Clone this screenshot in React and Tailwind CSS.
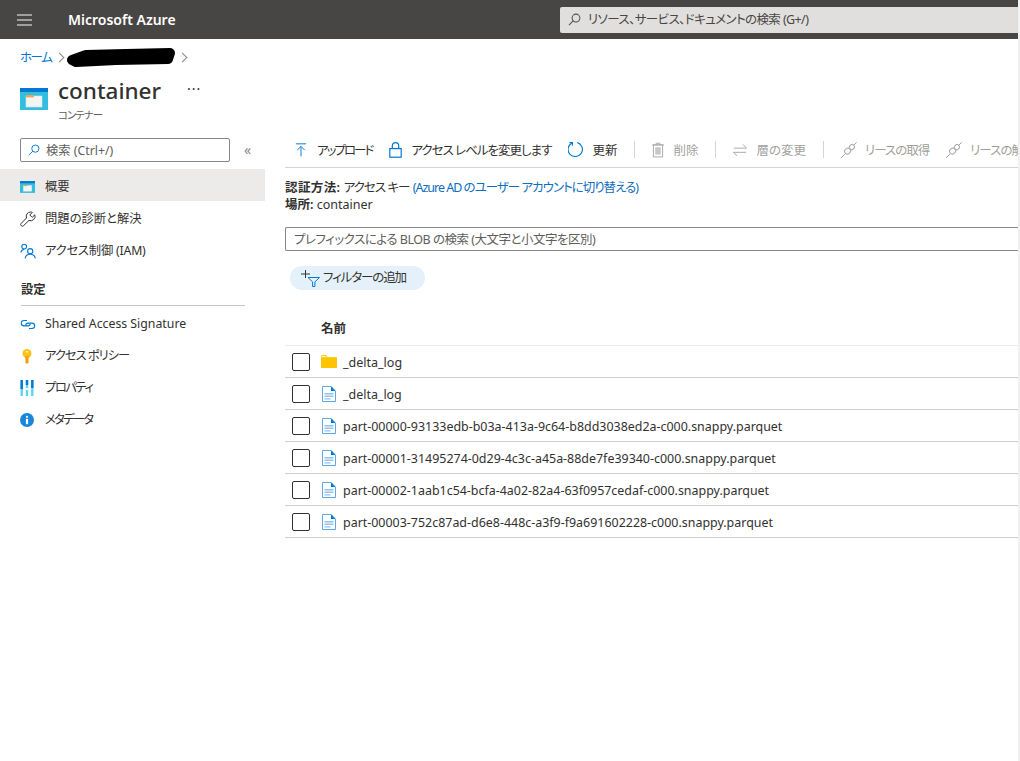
import React from "react";

const font = "font-['Noto_Sans','Noto_Sans_CJK_JP',sans-serif] [font-feature-settings:'palt']";

const files = [
  "_delta_log",
  "part-00000-93133edb-b03a-413a-9c64-b8dd3038ed2a-c000.snappy.parquet",
  "part-00001-31495274-0d29-4c3c-a45a-88de7fe39340-c000.snappy.parquet",
  "part-00002-1aab1c54-bcfa-4a02-82a4-63f0957cedaf-c000.snappy.parquet",
  "part-00003-752c87ad-d6e8-448c-a3f9-f9a691602228-c000.snappy.parquet",
];

const SearchIcon = ({ color = "#505050", size = 14 }) => (
  <svg width={size} height={size} viewBox="0 0 14 14" fill="none" stroke={color} strokeWidth="1.1">
    <circle cx="8.6" cy="5.4" r="4.2" />
    <path d="M5.6 8.4 1 13" />
  </svg>
);

const ContainerIcon = ({ w = 28, h = 22 }) => (
  <svg width={w} height={h} viewBox="0 0 28 22">
    <rect width="28" height="22" fill="#32bedd" />
    <rect width="28" height="4" fill="#0078d4" />
    <rect x="6" y="8" width="16" height="11" fill="#f4f4f4" stroke="#c9e6ee" strokeWidth="0.6" />
    <rect x="6" y="7" width="8" height="2.4" fill="#e8a94f" />
  </svg>
);

const WrenchIcon = () => (
  <svg width="16" height="16" viewBox="0 0 16 16" fill="none" stroke="#333" strokeWidth="1">
    <path d="M10.5 1a4.4 4.4 0 0 0-4 6L1.2 12.4a1.6 1.6 0 0 0 2.3 2.3L9 9.4a4.4 4.4 0 0 0 5.8-5.6L12.2 6.4 9.8 4 12.3 1.4A4.4 4.4 0 0 0 10.5 1Z" />
  </svg>
);

const UsersIcon = () => (
  <svg width="16" height="16" viewBox="0 0 16 16" fill="none" stroke="#0078d4" strokeWidth="1.1">
    <circle cx="4.2" cy="3.6" r="2.4" />
    <path d="M.8 9.5c.4-2 1.7-3 3.4-3" />
    <circle cx="10.2" cy="8.2" r="2.6" />
    <path d="M5.2 15.5c.3-2.7 2.3-4.2 5-4.2s4.7 1.5 5 4.2" />
  </svg>
);

const LinkIcon = () => (
  <svg width="16" height="11" viewBox="0 0 16 11" fill="none" stroke="#0078d4" strokeWidth="1.1">
    <path d="M7 1.5H4a2.7 2.7 0 0 0 0 5.4h4a2.5 2.5 0 0 0 2.3-2.4" />
    <path d="M9 9.5h3a2.7 2.7 0 0 0 0-5.4H8a2.5 2.5 0 0 0-2.3 2.4" />
  </svg>
);

const KeyIcon = () => (
  <svg width="10" height="15" viewBox="0 0 10 15" className="ml-[2px]">
    <circle cx="5" cy="4.5" r="4.5" fill="#fcc21b" />
    <path d="M3.4 7h3.2v6.2L5 15l-1.6-1.8Z" fill="#f0a30a" />
    <circle cx="5" cy="2.8" r="1" fill="#fff3c4" />
  </svg>
);

const PropsIcon = () => (
  <svg width="14" height="16" viewBox="0 0 14 16">
    <rect x="0.5" y="0" width="2.4" height="16" fill="#5ed4f2" />
    <rect x="0.5" y="0" width="2.4" height="9" fill="#0078d4" />
    <rect x="5.8" y="0" width="2.4" height="16" fill="#5ed4f2" />
    <rect x="5.8" y="0" width="2.4" height="5" fill="#0078d4" />
    <rect x="5.8" y="8" width="2.4" height="2" fill="#fff" />
    <rect x="11.1" y="0" width="2.4" height="16" fill="#5ed4f2" />
    <rect x="11.1" y="0" width="2.4" height="8" fill="#0078d4" />
  </svg>
);

const InfoIcon = () => (
  <svg width="14" height="14" viewBox="0 0 14 14">
    <circle cx="7" cy="7" r="7" fill="#1b86d8" />
    <circle cx="7" cy="3.8" r="1.1" fill="#fff" />
    <rect x="5.9" y="5.8" width="2.2" height="5.4" fill="#fff" />
  </svg>
);

const UploadIcon = () => (
  <svg width="12" height="16" viewBox="0 0 14 16" fill="none" stroke="#0078d4" strokeWidth="1.1">
    <path d="M1 .8h12M7 15.5V4M2.6 8.2 7 3.8l4.4 4.4" />
  </svg>
);

const LockIcon = () => (
  <svg width="13" height="16" viewBox="0 0 13 16" fill="none" stroke="#0078d4" strokeWidth="1.2">
    <rect x=".8" y="6.6" width="11.4" height="8.6" />
    <path d="M3.3 6.6V3.8a3.2 3.2 0 0 1 6.4 0v2.8" />
  </svg>
);

const RefreshIcon = () => (
  <svg width="16" height="17" viewBox="0 0 17 17" fill="none" stroke="#0078d4" strokeWidth="1.2">
    <path d="M4.2 1.6A7.6 7.6 0 1 0 9.6 1" />
    <path d="M1.5 1.2h3.2v3.2" />
  </svg>
);

const TrashIcon = () => (
  <svg width="12" height="16" viewBox="0 0 13 16" fill="none" stroke="#a6a6a6" strokeWidth="1">
    <path d="M0 2.5h13M4.5 2.5V.7h4v1.8" />
    <rect x="1.5" y="2.5" width="10" height="13" />
    <rect x="3.5" y="5" width="6" height="8" fill="#c8c8c8" stroke="none" />
  </svg>
);

const SwapIcon = () => (
  <svg width="14" height="14" viewBox="0 0 15 14" fill="none" stroke="#a6a6a6" strokeWidth="1">
    <path d="M1 5h13.5M10.5 1l4 4M14 9.5H.6M4.5 13.5l-4-4" />
  </svg>
);

const PlugIcon = () => (
  <svg width="16" height="16" viewBox="0 0 16 16" fill="none" stroke="#a6a6a6" strokeWidth="1">
    <path d="M0 16l4.2-4.2M12 4 15.6.4" />
    <rect x="3.6" y="6.4" width="6" height="5.4" rx="2.4" transform="rotate(-45 6.6 9.1)" fill="#fff" />
    <rect x="8.4" y="2.8" width="5" height="4.6" rx="1.6" transform="rotate(-45 10.9 5.1)" fill="#fff" />
  </svg>
);

const FilterAddIcon = () => (
  <svg width="19" height="17" viewBox="0 0 19 17" fill="none" stroke="#0078d4" strokeWidth="1">
    <path d="M0 4h9M4.5 0v8" stroke="#333" />
    <path d="M7 7.5h11.5l-4.6 4.4v4.6h-2.3v-4.6Z" />
  </svg>
);

const FolderIcon = () => (
  <svg width="16" height="13" viewBox="0 0 16 13">
    <path d="M0 1a1 1 0 0 1 1-1h4l1.6 2H16v11H0Z" fill="#fcd116" />
    <path d="M0 3h16v10H0Z" fill="#fdc500" />
    <rect x="1" y="1" width="3.4" height="1" fill="#fff" />
  </svg>
);

const FileIcon = () => (
  <svg width="14" height="16" viewBox="0 0 14 16">
    <path d="M.5.5h8.6l4.4 4.4v10.6H.5Z" fill="#fff" stroke="#5ea7e3" />
    <path d="M9 .5v4.5h4.5Z" fill="#0078d4" />
    <path d="M2.5 7h9v1.4h-9Zm0 2.6h9V11h-9Zm0 2.6h6v1.4h-6Z" fill="#8fc1ea" />
  </svg>
);

// the hand-drawn scribble that hides part of the breadcrumb
const Scribble = () => (
  <svg width="110" height="20" viewBox="0 0 110 20" fill="none" stroke="#000" strokeLinecap="round" strokeLinejoin="round">
    <path d="M6 13 20 8l40-1 44-1-2 6-52 1-40 2Z" strokeWidth="10" fill="#000" />
  </svg>
);

const Nav = ({ icon, label, active, track = "" }) => (
  <div className={`flex items-center h-8 pl-5 pt-[4px] text-[#323130] ${active ? "bg-[#edebe9]" : ""}`}>
    <span className="w-[25px] flex items-center">{icon}</span>
    <span className={track}>{label}</span>
  </div>
);

const Tool = ({ icon, label, off, track = "", gap = "gap-[9px]" }) => (
  <div className={`flex items-center shrink-0 ${gap} whitespace-nowrap ${off ? "text-[#a19f9d]" : "text-[#323130]"}`}>
    {icon}
    <span className={`pt-[3px] ${track}`}>{label}</span>
  </div>
);

const Sep = () => <div className="w-px h-[17px] shrink-0 bg-[#d6d4d2]" />;

export default function App() {
  return (
    <div className={`w-[1020px] h-[761px] overflow-hidden bg-white border-r-2 border-[#f0f0f0] text-[12.5px] text-[#323130] ${font}`}>
      <header className="h-[39px] bg-[#484644] flex items-center text-white">
        <div className="w-[15px] ml-[17px] flex flex-col gap-[3px]">
          <div className="h-[2px] bg-[#a19f9d]" />
          <div className="h-[2px] bg-[#a19f9d]" />
          <div className="h-[2px] bg-[#a19f9d]" />
        </div>
        <div className="ml-[36px] w-[492px] text-[14px] font-semibold">Microsoft Azure</div>
        <div className="flex-1 h-[26px] bg-[#e1dfdd] rounded-l-[2px] flex items-center pl-[8px] gap-[7px] text-[#484644] text-[12.5px]">
          <SearchIcon size={13} />
          <span className="pt-[2px] tracking-[-0.6px]">リソース、サービス、ドキュメントの検索 (G+/)</span>
        </div>
      </header>

      <div className="h-[36px] pl-5 flex items-center text-[12.5px]">
        <span className="text-[#0078d4] w-[31px] whitespace-nowrap pt-[2px] tracking-[-1.5px]">ホーム</span>
        <span className="ml-[5px] w-[7px] h-[7px] border-t border-r border-[#8a8886] rotate-45" />
        <span className="ml-[3px] flex"><Scribble /></span>
        <span className="ml-[3px] w-[7px] h-[7px] border-t border-r border-[#8a8886] rotate-45" />
      </div>

      <div className="h-[46px] pl-5 flex items-start">
        <div className="mt-[13px]"><ContainerIcon /></div>
        <div className="ml-[10px]">
          <div className="flex items-center">
            <h1 className="text-[22.5px] leading-[32px] font-medium">container</h1>
            <span className="ml-[26px] mb-[4px] text-[14px] leading-none tracking-[1px]">···</span>
          </div>
          <div className="text-[10.5px] leading-[14px] text-[#605e5c] pt-[1px] tracking-[-1px]">コンテナー</div>
        </div>
      </div>

      <div className="flex mt-[11px]">
        <aside className="w-[265px] shrink-0 text-[12.3px]">
          <div className="flex items-center pl-5 pt-[6px] mb-[7px]">
            <div className="w-[210px] h-[24px] border border-[#8a8886] rounded-[2px] flex items-center pl-[7px] gap-[6px] text-[#605e5c]">
              <SearchIcon color="#0078d4" size={12} />
              <span className="pt-[2px]">検索 (Ctrl+/)</span>
            </div>
            <span className="ml-[14px] text-[#8a8886] text-[14px] leading-none">«</span>
          </div>
          <Nav active label="概要" icon={<ContainerIcon w={15} h={12} />} />
          <Nav label="問題の診断と解決" icon={<WrenchIcon />} />
          <Nav label="アクセス制御 (IAM)" track="tracking-[-0.2px]" icon={<UsersIcon />} />
          <div className="ml-[21px] mr-5 mt-[15px] pb-[5px] border-b border-[#c8c6c4] font-semibold leading-[20px]">設定</div>
          <Nav label="Shared Access Signature" icon={<LinkIcon />} />
          <Nav label="アクセス ポリシー" track="tracking-[-1px]" icon={<KeyIcon />} />
          <Nav label="プロパティ" track="tracking-[-1.5px]" icon={<PropsIcon />} />
          <Nav label="メタデータ" track="tracking-[-1.7px]" icon={<InfoIcon />} />
        </aside>

        <main className="flex-1 min-w-0 pl-5 pr-0">
          <div className="h-[36px] border-b border-[#d6d4d2] flex items-center gap-[17px] pl-[10px] overflow-hidden">
            <Tool icon={<UploadIcon />} label="アップロード" track="tracking-[-2px]" gap="gap-[10px]" />
            <Tool icon={<LockIcon />} label="アクセス レベルを変更します" track="tracking-[-1px]" />
            <Tool icon={<RefreshIcon />} label="更新" gap="gap-[8px]" />
            <Sep />
            <Tool off icon={<TrashIcon />} label="削除" />
            <Sep />
            <Tool off icon={<SwapIcon />} label="層の変更" />
            <Sep />
            <Tool off icon={<PlugIcon />} label="リースの取得" track="tracking-[-1px]" gap="gap-[8px]" />
            <Tool off icon={<PlugIcon />} label="リースの解除" track="tracking-[-1px]" gap="gap-[8px]" />
          </div>

          <div className="mt-[11px] leading-[17px]">
            <div>
              <span className="font-semibold tracking-[0.4px]">認証方法:</span>{" "}
              <span className="tracking-[-1px]">アクセス キー</span>{" "}
              <span className="text-[#106ebe] tracking-[-1px]">(Azure AD のユーザー アカウントに切り替える)</span>
            </div>
            <div>
              <span className="font-semibold">場所:</span> container
            </div>
          </div>

          <div className="mt-[14px] h-[24px] border border-r-0 border-[#8a8886] rounded-l-[2px] flex items-center pl-[8px] pt-[2px] text-[#605e5c] tracking-[-0.5px]">
            プレフィックスによる BLOB の検索 (大文字と小文字を区別)
          </div>

          <div className="mt-[15px] ml-[5px] w-[135px] h-[24px] rounded-full bg-[#e5f1fa] flex items-center pl-[11px] gap-[3px]">
            <FilterAddIcon />
            <span className="pt-[1px] tracking-[-1.1px]">フィルターの追加</span>
          </div>

          <div className="mt-[21px] h-[35px] pl-[36px] pt-[2px] flex items-center border-b border-[#edebe9] font-semibold">名前</div>

          <div className="h-[32px] flex items-center border-b border-[#d2d0ce]">
            <span className="ml-[7px] w-[18px] h-[18px] border border-[#323130] rounded-[2px]" />
            <span className="ml-[11px] w-[22px] flex"><FolderIcon /></span>
            <span className="pt-[3px]">_delta_log</span>
          </div>
          {files.map((name, i) => (
            <div className="h-[32px] flex items-center border-b border-[#d2d0ce]" key={i}>
              <span className="ml-[7px] w-[18px] h-[18px] border border-[#323130] rounded-[2px]" />
              <span className="ml-[12px] w-[21px] flex"><FileIcon /></span>
              <span className="pt-[3px] text-[12.45px] whitespace-nowrap">{name}</span>
            </div>
          ))}
        </main>
      </div>
    </div>
  );
}
